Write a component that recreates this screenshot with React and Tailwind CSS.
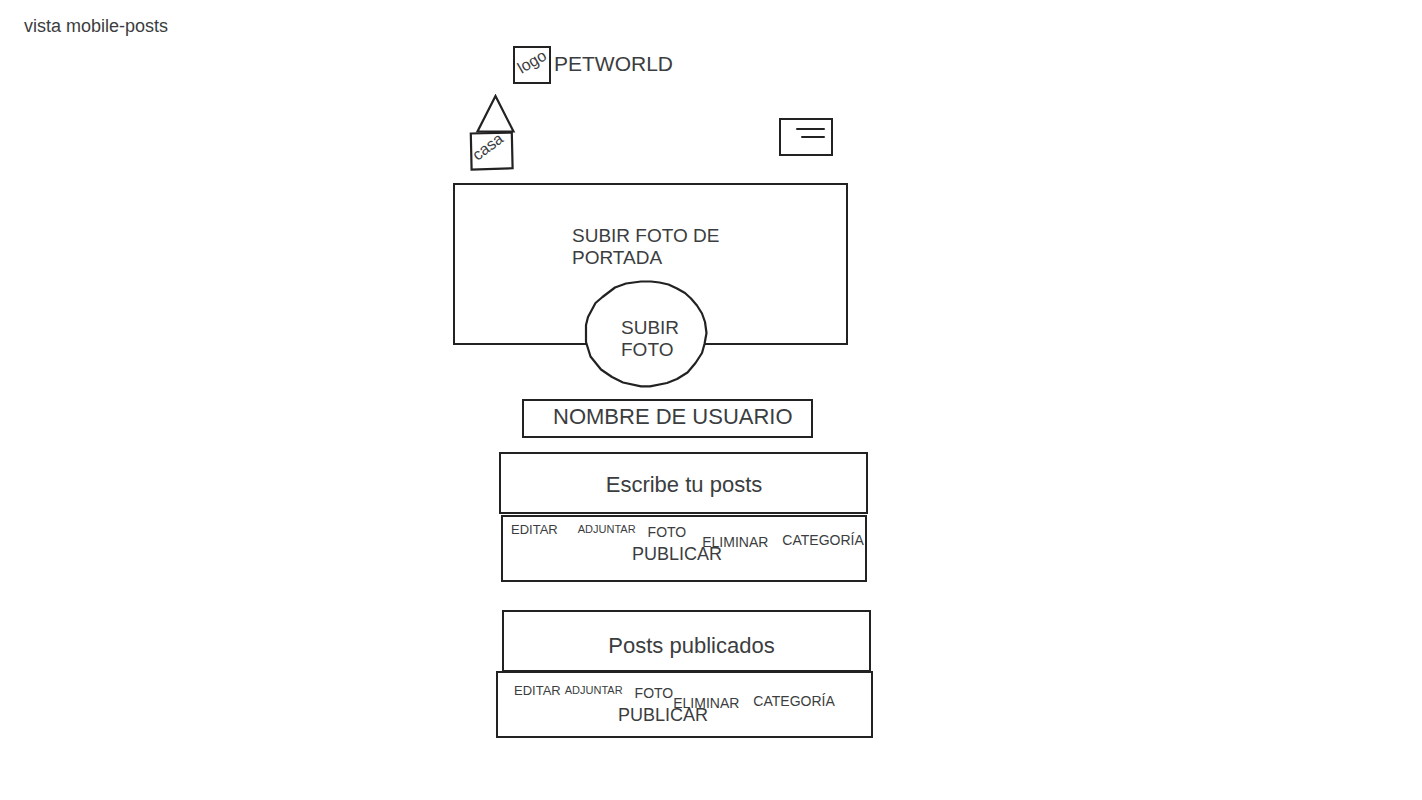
import React from "react";

const composerActions = [
  { label: "EDITAR", className: "mt-px text-[13px]" },
  { label: "ADJUNTAR", className: "ml-5 text-[11px]" },
  { label: "FOTO", className: "ml-3 mt-[3px] text-sm/4" },
  { label: "ELIMINAR", className: "ml-4 mt-[13px] text-sm/4" },
  { label: "CATEGORÍA", className: "ml-[14px] mt-[11px] text-sm/4" },
];

const publishedActions = [
  { label: "EDITAR", className: "mt-px text-[13px]" },
  { label: "ADJUNTAR", className: "ml-1 text-[11px]" },
  { label: "FOTO", className: "ml-3 mt-[3px] text-sm/4" },
  { label: "ELIMINAR", className: "mt-[13px] text-sm/4" },
  { label: "CATEGORÍA", className: "ml-[14px] mt-[11px] text-sm/4" },
];

function Toolbar({ label, actions, className, publishClassName }) {
  return (
    <div role="toolbar" aria-label={label} className={`h-[67px] border-2 border-[#222] ${className}`}>
      <div className="flex items-start">
        {actions.map((action) => (
          <button key={action.label} type="button" className={`shrink-0 leading-4 ${action.className}`}>
            {action.label}
          </button>
        ))}
      </div>
      <button type="button" className={`-mt-[6px] block text-lg/5 ${publishClassName}`}>
        PUBLICAR
      </button>
    </div>
  );
}

function HomeLink() {
  return (
    <a href="#casa" className="relative block h-[77px] w-12">
      <svg viewBox="0 0 48 77" className="h-full w-full" fill="none" stroke="#222" strokeWidth="2.2" aria-hidden="true">
        <path d="M27.5 2 45.5 37.5H9.5Z" />
        <path d="M2.8 39.5 43.8 38.5 44.6 74.3 3.6 75.5Z" />
      </svg>
      <span className="absolute left-[3px] top-[43px] -rotate-[37deg] text-base/5">casa</span>
    </a>
  );
}

function ProfilePhotoButton() {
  return (
    <button type="button" className="absolute left-[129px] top-[94px] h-[110px] w-[126px] text-left">
      <svg viewBox="584 279 126 110" className="absolute inset-0 h-full w-full" fill="white" stroke="#222" strokeWidth="2.2" strokeLinejoin="round" aria-hidden="true">
        <path d="M641 281.5H651L659.5 282.5 668.5 284.5 677 288.5 685 293 691 298.5 697 305.5 702 313.5 705 322 706.5 333 704.5 344 702 353 695.5 363 687.5 372.5 677 379 667 383 650 386.3H641L623 382.5 612 377 601 369.5 590.5 356.5 586 342V325L588 317 595.5 303 602.5 297 615 287.5 626 283.5Z" />
      </svg>
      <span className="relative block pl-[37px] pr-7 pt-[10px] text-[19px]/[22px]">SUBIR FOTO</span>
    </button>
  );
}

export default function App() {
  return (
    <div className="min-h-screen bg-white pb-10 font-['Liberation_Sans',Arial,sans-serif] text-[#3b3d40]">
      <header className="px-6 pt-4">
        <p className="text-lg/5">vista mobile-posts</p>
      </header>

      <div className="pt-[10px] lg:pr-24">
        <main className="mx-auto flex max-w-[420px] flex-col">
          <div className="ml-[60px] flex items-center gap-[3px]">
            <div className="flex size-[38px] items-center justify-center border-2 border-[#222]">
              <span className="-mt-[7px] -rotate-[30deg] text-base/5">logo</span>
            </div>
            <h1 className="pb-[3px] text-[21px]/7">PETWORLD</h1>
          </div>

          <nav aria-label="Principal" className="mt-[10px] flex items-start justify-between pl-[15px] pr-10">
            <HomeLink />
            <button type="button" aria-label="Menú" className="mt-6 flex h-[38px] w-[54px] flex-col items-end gap-[6px] border-2 border-[#222] pr-[6px] pt-2">
              <span className="h-[2px] w-[29px] rounded-full bg-[#222]" />
              <span className="h-[2px] w-6 rounded-full bg-[#222]" />
            </button>
          </nav>

          <section aria-label="Portada" className="relative mr-[25px] mt-3 h-[162px] border-2 border-[#222] pl-[117px] pt-10">
            <button type="button" className="w-40 text-left text-[19px]/[22px]">
              SUBIR FOTO DE PORTADA
            </button>
            <ProfilePhotoButton />
          </section>

          <h2 className="ml-[69px] mr-[60px] mt-[54px] h-[39px] border-2 border-[#222] pl-[29px] pt-[2px] text-[22px]/7">
            NOMBRE DE USUARIO
          </h2>

          <section aria-label="Nuevo post" className="mt-[14px]">
            <input
              type="text"
              aria-label="Escribe tu posts"
              placeholder="Escribe tu posts"
              className="ml-[46px] block h-[62px] w-[369px] border-2 border-[#222] pl-px pt-1 text-center text-[22px] outline-none placeholder:text-[#3b3d40] placeholder:opacity-100"
            />
            <Toolbar
              label="Acciones del nuevo post"
              actions={composerActions}
              className="ml-12 mr-[6px] mt-px pl-2 pt-1"
              publishClassName="ml-[121px]"
            />
          </section>

          <section aria-label="Publicados" className="mt-7">
            <h2 className="ml-[49px] mr-[2px] flex h-[62px] items-center justify-center border-2 border-[#222] pl-[10px] pt-[10px] text-[22px]/7">
              Posts publicados
            </h2>
            <Toolbar
              label="Acciones del post publicado"
              actions={publishedActions}
              className="ml-[43px] -mt-px pl-4 pt-[9px]"
              publishClassName="ml-[104px]"
            />
          </section>
        </main>
      </div>
    </div>
  );
}
